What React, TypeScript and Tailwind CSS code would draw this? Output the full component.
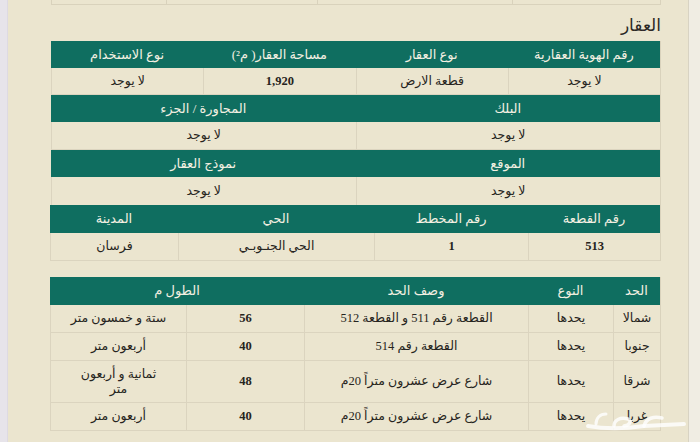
import React from "react";

const F = { fontFamily: '"Liberation Serif", "DejaVu Sans", serif' };

function H({ children, className = "" }: { children?: React.ReactNode; className?: string }) {
  return (
    <div className={"flex items-center justify-center bg-[#0f6e60] text-[#f4f0e2] text-[13px] " + className}>
      {children}
    </div>
  );
}

function D({ children, className = "" }: { children?: React.ReactNode; className?: string }) {
  return (
    <div className={"flex items-center justify-center text-[#262420] text-[12.5px] border-l border-b border-[#dbd4bf] text-center leading-[15px] " + className}>
      {children}
    </div>
  );
}

export default function App() {
  return (
    <div className="w-[700px] h-[442px] bg-[#ebe5cf] flex overflow-hidden relative" style={F}>
      <div className="w-[8px] h-full bg-[#e7e4ea] border-r border-[#dedae2]" />
      <div className="w-[680px] flex flex-col pl-[43px] pr-[27px]">
        {/* top remnant row */}
        <div dir="rtl" className="grid grid-cols-[149px_195px_151px_115px] h-[5px] border-b border-[#d9d2bc]">
          <div className="border-l border-r border-[#d9d2bc]" />
          <div className="border-l border-[#d9d2bc]" />
          <div className="border-l border-[#d9d2bc]" />
          <div className="border-l border-[#d9d2bc]" />
        </div>
        {/* title */}
        <div dir="rtl" className="h-[36px] flex items-end pb-[3px]">
          <span className="text-[17px] text-[#2a2824]" style={{ fontFamily: '"DejaVu Sans", serif' }}>العقار</span>
        </div>
        {/* table 1 */}
        <div dir="rtl" className="grid grid-cols-4 border-r border-[#d9d2bc]">
          <H className="h-[27px]">رقم الهوية العقارية</H>
          <H className="h-[27px]">نوع العقار</H>
          <H className="h-[27px]">مساحة العقار( م²)</H>
          <H className="h-[27px]">نوع الاستخدام</H>
          <D className="h-[27px]">لا يوجد</D>
          <D className="h-[27px]">قطعة الارض</D>
          <D className="h-[27px] font-bold">1,920</D>
          <D className="h-[27px]">لا يوجد</D>
        </div>
        {/* table 2 */}
        <div dir="rtl" className="grid grid-cols-2 border-r border-[#d9d2bc]">
          <H className="h-[27px]">البلك</H>
          <H className="h-[27px]">المجاورة / الجزء</H>
          <D className="h-[28px]">لا يوجد</D>
          <D className="h-[28px]">لا يوجد</D>
          <H className="h-[27px]">الموقع</H>
          <H className="h-[27px]">نموذج العقار</H>
          <D className="h-[28px] border-b-0">لا يوجد</D>
          <D className="h-[28px] border-b-0">لا يوجد</D>
        </div>
        {/* table 3 */}
        <div dir="rtl" className="grid grid-cols-[132px_154px_196px_128px] border-r border-[#d9d2bc]">
          <H className="h-[28px]">رقم القطعة</H>
          <H className="h-[28px]">رقم المخطط</H>
          <H className="h-[28px]">الحي</H>
          <H className="h-[28px]">المدينة</H>
          <D className="h-[28px] font-bold">513</D>
          <D className="h-[28px] font-bold">1</D>
          <D className="h-[28px]">الحي الجنـوبـي</D>
          <D className="h-[28px]">فرسان</D>
        </div>
        <div className="h-[16px]" />
        {/* table 4 */}
        <div dir="rtl" className="grid grid-cols-[47px_85px_224px_118px_136px] border-r border-[#d9d2bc]">
          <H className="h-[28px]">الحد</H>
          <H className="h-[28px]">النوع</H>
          <H className="h-[28px]">وصف الحد</H>
          <H className="h-[28px] col-span-2">الطول م</H>

          <D className="h-[28px]">شمالا</D>
          <D className="h-[28px]">يحدها</D>
          <D className="h-[28px]">القطعة رقم 511 و القطعة 512</D>
          <D className="h-[28px] font-bold">56</D>
          <D className="h-[28px]">ستة و خمسون متر</D>

          <D className="h-[28px]">جنوبا</D>
          <D className="h-[28px]">يحدها</D>
          <D className="h-[28px]">القطعة رقم 514</D>
          <D className="h-[28px] font-bold">40</D>
          <D className="h-[28px]">أربعون متر</D>

          <D className="h-[42px]">شرقا</D>
          <D className="h-[42px]">يحدها</D>
          <D className="h-[42px]">شارع عرض عشرون متراً 20م</D>
          <D className="h-[42px] font-bold">48</D>
          <D className="h-[42px] px-[24px]">ثمانية و أربعون متر</D>

          <D className="h-[28px]">غربا</D>
          <D className="h-[28px]">يحدها</D>
          <D className="h-[28px]">شارع عرض عشرون متراً 20م</D>
          <D className="h-[28px] font-bold">40</D>
          <D className="h-[28px]">أربعون متر</D>
        </div>
      </div>
      <div className="w-[12px] h-full bg-[#f0ede3] border-l border-[#d8d3c3]" />
      {/* watermark logo */}
      <svg className="absolute left-[584px] top-[404px]" width="106" height="30" viewBox="0 0 106 30">
        <g fill="none" stroke="#ffffff" strokeOpacity="0.8" strokeLinecap="round" strokeLinejoin="round">
          <path d="M4 22 C 20 25, 40 25, 60 22 L 100 20" strokeWidth="4" />
          <path d="M60 22 C 62 14, 70 12, 78 14" strokeWidth="3.5" />
          <path d="M30 22 C 30 16, 36 13, 44 15 C 48 17, 46 21, 40 22" strokeWidth="3.5" />
          <path d="M12 20 C 12 14, 16 10, 22 10" strokeWidth="3" />
        </g>
      </svg>
    </div>
  );
}
